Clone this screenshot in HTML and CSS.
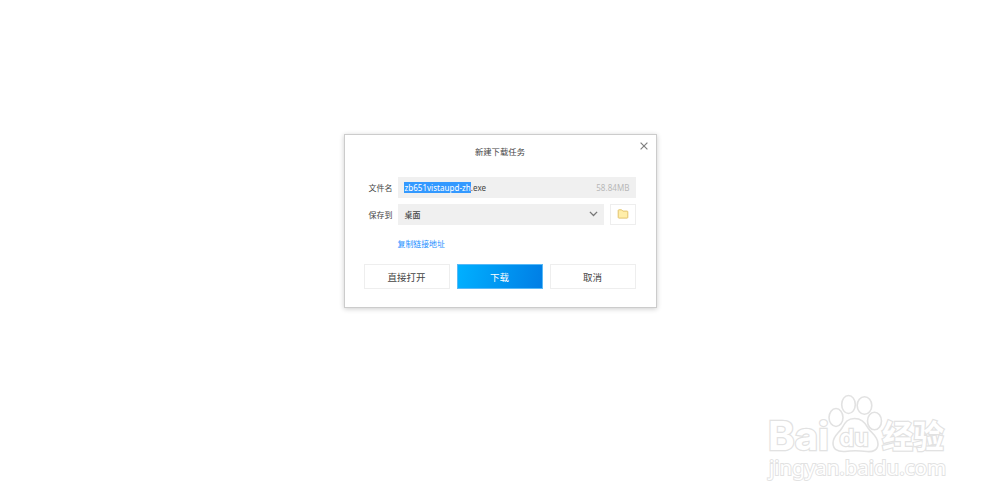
FILE: index.html
```html
<!DOCTYPE html>
<html lang="zh-CN">
<head>
  <meta charset="UTF-8" />
  <meta name="viewport" content="width=device-width, initial-scale=1.0" />
  <title>新建下载任务</title>
  <link rel="stylesheet" href="styles.css">
</head>
<body>

  <div class="dialog">
    <button class="close-btn" aria-label="关闭">
      <svg width="8" height="8" viewBox="0 0 8 8"><path d="M0.6 0.6L7.4 7.4M7.4 0.6L0.6 7.4" /></svg>
    </button>
    <h2>新建下载任务</h2>

    <div class="row">
      <label>文件名</label>
      <div class="field file-field">
        <span class="file-name"><span class="selected">zb651vistaupd-zh</span>.exe</span>
        <span class="file-size">58.84MB</span>
      </div>
    </div>

    <div class="row">
      <label>保存到</label>
      <div class="field path-field">
        <span>桌面</span>
        <svg class="arrow" width="9" height="6" viewBox="0 0 9 6"><path d="M0.9 0.9L4.5 4.5L8.1 0.9" /></svg>
      </div>
      <button class="folder-btn" aria-label="浏览">
        <svg width="12" height="10" viewBox="0 0 12 10"><path d="M1.2 1.5Q1.2 0.8 1.9 0.8H4.6L5.8 2.1H10.1Q10.8 2.1 10.8 2.8V8.4Q10.8 9.1 10.1 9.1H1.9Q1.2 9.1 1.2 8.4Z" /></svg>
      </button>
    </div>

    <a class="copy-link" href="#">复制链接地址</a>

    <div class="actions">
      <button>直接打开</button>
      <button class="primary">下载</button>
      <button>取消</button>
    </div>
  </div>

  <!-- Watermark -->
  <svg class="watermark" width="200" height="100" viewBox="0 0 200 100">
    <text class="logo" x="13" y="60" textLength="61" lengthAdjust="spacingAndGlyphs">Bai</text>
    <g class="paw">
      <ellipse cx="81" cy="27.5" rx="7" ry="9" />
      <ellipse cx="93.5" cy="14.5" rx="6.8" ry="9" />
      <ellipse cx="109.5" cy="15.5" rx="7.3" ry="8.7" />
      <ellipse cx="119.5" cy="31" rx="7" ry="8.8" />
      <path d="M99.5 28.5C106 28.5 110 32 113 38C117 44 123 46 123 54C123 60 118 62 112 61.5C104 60.5 96 60.5 90 61.5C82 62 78 59 78 53C78 46 84 43 87 38C90 32 93 28.5 99.5 28.5Z" />
    </g>
    <text class="du" x="84.5" y="56" textLength="29" lengthAdjust="spacingAndGlyphs">du</text>
    <text class="logo-cn" x="127" y="58" textLength="62" lengthAdjust="spacingAndGlyphs">经验</text>
    <text class="site" x="14" y="85" textLength="177" lengthAdjust="spacingAndGlyphs">jingyan.baidu.com</text>
  </svg>

</body>
</html>
```
FILE: styles.css
```css
* {
  box-sizing: border-box;
  margin: 0;
  padding: 0;
}

body {
  height: 502px;
  padding-top: 134px;
  background: white;
  font-family: "Noto Sans", "Noto Sans CJK SC", sans-serif;
  font-size: 8px;
  color: #444;
  overflow: hidden;
}

button {
  border: 1px solid #eee;
  background: white;
  font-family: inherit;
  color: #444;
}

.dialog {
  position: relative;
  width: 313px;
  height: 174px;
  margin: 0 auto;
  padding: 11px 20px 0;
  border: 1px solid #ccc;
  background: white;
  box-shadow: 0 1px 5px rgba(0, 0, 0, 0.2);
}

.close-btn {
  position: absolute;
  top: 7px;
  right: 8px;
  width: 8px;
  height: 8px;
  border: none;
}

.close-btn svg {
  display: block;
  fill: none;
  stroke: #808080;
  stroke-width: 1.2;
}

h2 {
  height: 12px;
  margin-bottom: 19px;
  font-size: 8.4px;
  line-height: 12px;
  font-weight: normal;
  text-align: center;
}

.row {
  display: flex;
  align-items: center;
  height: 20px;
  margin-bottom: 7px;
}

label {
  width: 28px;
  margin-right: 6px;
  text-align: right;
}

.field {
  display: flex;
  align-items: center;
  justify-content: space-between;
  height: 21px;
  padding: 0 6px;
  background: #f0f0f0;
}

.file-field {
  width: 238px;
}

.file-name {
  line-height: 11px;
  letter-spacing: 0.04px;
}

.selected {
  display: inline-block;
  background: #3399ff;
  color: white;
}

.file-size {
  color: #b8b8b8;
  letter-spacing: 0.05px;
}

.path-field {
  width: 206px;
  font-weight: 500;
}

.arrow {
  fill: none;
  stroke: #777;
  stroke-width: 1.3;
}

.folder-btn {
  display: flex;
  align-items: center;
  justify-content: center;
  width: 26px;
  height: 21px;
  margin-left: 6px;
}

.folder-btn path {
  fill: #ffeeaa;
  stroke: #e3c36c;
  stroke-width: 1;
}

.copy-link {
  display: block;
  height: 12px;
  margin: 14px 0 14px 33px;
  font-size: 7.9px;
  line-height: 12px;
  color: #1e90ff;
  text-decoration: none;
}

.actions {
  display: flex;
  justify-content: space-between;
  margin-left: -1px;
}

.actions button {
  width: 86px;
  height: 25px;
  font-size: 9.5px;
}

.actions .primary {
  border: 1px solid #58b9f7;
  background: linear-gradient(100deg, #00b0ff, #007ee5);
  color: white;
}

.watermark {
  position: absolute;
  left: 755px;
  top: 390px;
  fill: white;
  stroke: #e2e2e2;
  stroke-width: 1.6;
  font-family: "Noto Sans", sans-serif;
}

.watermark text {
  paint-order: stroke;
  stroke-width: 2.4;
}

.watermark .logo {
  font-family: Inter, sans-serif;
  font-size: 39px;
  font-weight: 700;
}

.watermark .du {
  font-family: Inter, sans-serif;
  font-size: 23px;
  font-weight: 600;
}

.watermark .logo-cn {
  font-family: "Noto Sans CJK SC", sans-serif;
  font-size: 32px;
  font-weight: bold;
}

.watermark .site {
  font-size: 19.5px;
  font-weight: 400;
  stroke-width: 1.8;
}
```
